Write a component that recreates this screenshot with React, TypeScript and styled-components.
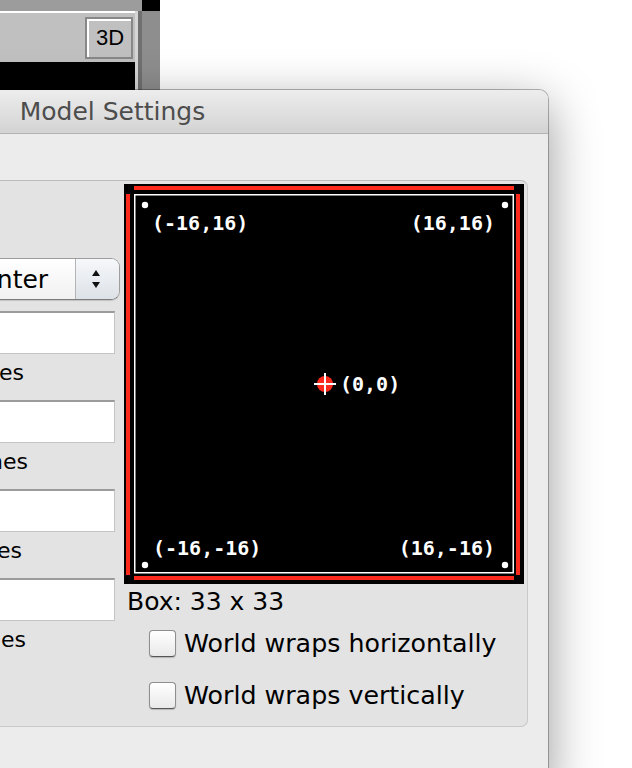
import React from "react";
import styled, { createGlobalStyle } from "styled-components";

const Global = createGlobalStyle`
  html, body { margin: 0; padding: 0; background: #fff; }
  body { font-family: "DejaVu Sans", "Liberation Sans", sans-serif; }
`;

const Page = styled.div`
  position: relative;
  width: 632px;
  height: 768px;
  overflow: hidden;
  background: #fff;
`;

/* ---------- background NetLogo window ---------- */
const BackWindow = styled.div`
  position: absolute;
  left: 0;
  top: 0;
  width: 160px;
  height: 110px;
  display: flex;
  flex-direction: column;
`;
const BackTop = styled.div`
  height: 11px;
  display: flex;
`;
const BackTopBand = styled.div`
  flex: 1;
  background: #9c9c9c;
`;
const BackTopCap = styled.div`
  width: 18px;
  background: #000;
`;
const BackBody = styled.div`
  flex: 1;
  display: flex;
`;
const BackMain = styled.div`
  width: 135px;
  display: flex;
  flex-direction: column;
`;
const Toolbar = styled.div`
  height: 49px;
  border-top: 2px solid #fff;
  background: #c0c0c0;
  display: flex;
  align-items: center;
  justify-content: flex-end;
  padding-right: 2px;
`;
const ThreeDButton = styled.div`
  width: 42px;
  height: 38px;
  border: 2px solid #888;
  box-shadow: inset 2px 2px 0 #fff;
  background: #c0c0c0;
  display: flex;
  align-items: center;
  justify-content: center;
  font-family: "Liberation Sans", Arial, sans-serif;
  font-size: 22px;
  color: #000;
  padding-left: 2px;
  box-sizing: content-box;
`;
const BackView = styled.div`
  flex: 1;
  background: #000;
`;
const BackStrip = styled.div<{ $w: number; $c: string }>`
  width: ${(p) => p.$w}px;
  background: ${(p) => p.$c};
`;

/* ---------- dialog ---------- */
const Dialog = styled.div`
  position: absolute;
  left: -323px;
  top: 90px;
  width: 871px;
  height: 700px;
  background: #ececec;
  border-radius: 9px 9px 0 0;
  box-shadow: 0 0 0 1px rgba(0, 0, 0, 0.28), 0 14px 50px rgba(0, 0, 0, 0.42);
  display: flex;
  flex-direction: column;
`;
const TitleBar = styled.div`
  height: 43px;
  background: linear-gradient(#ededed, #d3d3d3);
  border-bottom: 1px solid #b3b3b3;
  border-radius: 9px 9px 0 0;
  display: flex;
  align-items: center;
  justify-content: center;
  font-size: 25px;
  color: #4d4d4d;
`;
const DialogBody = styled.div`
  padding: 46px 20px 0 20px;
`;
const Group = styled.div`
  display: flex;
  gap: 4px;
  padding: 3px 3px 5px 0;
  background: #e3e3e3;
  border: 1px solid #c9c9c9;
  border-top-color: #bcbcbc;
  border-radius: 7px;
`;

/* left column */
const LeftCol = styled.div`
  flex: 1;
  min-width: 0;
  display: flex;
  flex-direction: column;
  align-items: flex-end;
  padding-top: 74px;
`;
const OriginRow = styled.div`
  display: flex;
  align-items: center;
  gap: 10px;
  margin-bottom: 11px;
`;
const SmallLabel = styled.span`
  font-size: 22px;
  color: #000;
  white-space: nowrap;
`;
const Popup = styled.div`
  width: 161px;
  height: 40px;
  flex-shrink: 0;
  display: flex;
  border: 1px solid #9d9d9d;
  border-bottom-color: #7c7c7c;
  border-radius: 5px 9px 9px 5px;
  background: linear-gradient(#ffffff, #f1f1f1);
  box-shadow: 0 1px 1px rgba(0, 0, 0, 0.15);
  overflow: hidden;
`;
const PopupText = styled.div`
  flex: 1;
  display: flex;
  align-items: center;
  padding-left: 6px;
  font-size: 25px;
  color: #000;
`;
const Stepper = styled.div`
  width: 39px;
  border-left: 1px solid #b4b4b4;
  background: linear-gradient(#f6f8fa, #dde2e8);
  display: flex;
  align-items: center;
  justify-content: center;
  padding-right: 4px;
`;
const FieldBlock = styled.div`
  display: flex;
  flex-direction: column;
  align-items: flex-end;
  margin-bottom: 14px;
`;
const FieldRow = styled.div`
  display: flex;
  align-items: center;
  gap: 10px;
  margin-right: 5px;
`;
const TextField = styled.div`
  width: 160px;
  height: 40px;
  flex-shrink: 0;
  background: #fff;
  border: 1px solid #c4c4c4;
  border-top: 2px solid #9b9b9b;
`;
const FieldHint = styled.div<{ $right: number }>`
  margin-top: 6px;
  margin-right: ${(p) => p.$right}px;
  height: 26px;
  line-height: 26px;
  font-size: 22px;
  color: #000;
  white-space: nowrap;
`;

/* right column */
const RightCol = styled.div`
  width: 400px;
  flex-shrink: 0;
  display: flex;
  flex-direction: column;
`;
const WorldView = styled.svg`
  display: block;
  width: 400px;
  height: 400px;
`;
const BoxLabel = styled.div`
  margin-top: 3px;
  margin-left: 3px;
  line-height: 30px;
  font-size: 25px;
  color: #000;
`;
const CheckRow = styled.label`
  height: 52px;
  display: flex;
  align-items: center;
  gap: 8px;
  padding-left: 25px;
  font-size: 25.3px;
  color: #000;
`;
const CheckBox = styled.span`
  width: 27px;
  height: 27px;
  box-sizing: border-box;
  border: 1px solid #8e8e8e;
  border-bottom-color: #555;
  border-radius: 4px;
  background: linear-gradient(#ffffff, #e9e9e9);
  box-shadow: 0 1px 1px rgba(0, 0, 0, 0.2);
`;

const RED = "#fc2a1c";
const monoText = {
  fontFamily: '"DejaVu Sans Mono", monospace',
  fontWeight: 700,
  fontSize: 20,
  fill: "#fff",
} as const;

function View() {
  return (
    <WorldView viewBox="0 0 400 400">
      <rect x="0" y="0" width="400" height="400" fill="#000" />
      <rect x="10" y="2" width="380" height="4" fill={RED} />
      <rect x="10" y="392" width="380" height="4" fill={RED} />
      <rect x="2" y="10" width="4" height="381" fill={RED} />
      <rect x="392" y="10" width="4" height="381" fill={RED} />
      <rect x="10.75" y="10.75" width="378.5" height="378" fill="none" stroke="#fff" strokeWidth="1.5" />
      <circle cx="21" cy="21" r="3.2" fill="#fff" />
      <circle cx="381" cy="21" r="3.2" fill="#fff" />
      <circle cx="21" cy="381" r="3.2" fill="#fff" />
      <circle cx="381" cy="381" r="3.2" fill="#fff" />
      <text x="28" y="46" style={monoText}>(-16,16)</text>
      <text x="371" y="46" textAnchor="end" style={monoText}>(16,16)</text>
      <text x="29" y="371" style={monoText}>(-16,-16)</text>
      <text x="371" y="371" textAnchor="end" style={monoText}>(16,-16)</text>
      <circle cx="201" cy="200" r="8" fill={RED} />
      <line x1="190" y1="200" x2="212" y2="200" stroke="#fff" strokeWidth="2" />
      <line x1="201" y1="189" x2="201" y2="211" stroke="#fff" strokeWidth="2" />
      <text x="216" y="207" style={monoText}>(0,0)</text>
    </WorldView>
  );
}

function StepArrows() {
  return (
    <svg width="10" height="20" viewBox="0 0 10 20">
      <path d="M5 1 L9 7 L1 7 Z" fill="#111" />
      <path d="M1 13 L9 13 L5 19 Z" fill="#111" />
    </svg>
  );
}

const fields = [
  { name: "min-pxcor", hint: "minimum x coordinate for patches", right: 96 },
  { name: "max-pxcor", hint: "maximum x coordinate for patches", right: 92 },
  { name: "min-pycor", hint: "minimum y coordinate for patches", right: 98 },
  { name: "max-pycor", hint: "maximum y coordinate for patches", right: 94 },
];

export default function App() {
  return (
    <Page>
      <Global />
      <BackWindow>
        <BackTop>
          <BackTopBand />
          <BackTopCap />
        </BackTop>
        <BackBody>
          <BackMain>
            <Toolbar>
              <ThreeDButton>3D</ThreeDButton>
            </Toolbar>
            <BackView />
          </BackMain>
          <BackStrip $w={3} $c="#d5d5d5" />
          <BackStrip $w={4} $c="#707070" />
          <BackStrip $w={18} $c="#8e8e8e" />
        </BackBody>
      </BackWindow>

      <Dialog>
        <TitleBar>Model Settings</TitleBar>
        <DialogBody>
          <Group>
            <LeftCol>
              <OriginRow>
                <SmallLabel>location of origin:</SmallLabel>
                <Popup>
                  <PopupText>Center</PopupText>
                  <Stepper>
                    <StepArrows />
                  </Stepper>
                </Popup>
              </OriginRow>
              {fields.map((f) => (
                <FieldBlock key={f.name}>
                  <FieldRow>
                    <SmallLabel>{f.name}</SmallLabel>
                    <TextField />
                  </FieldRow>
                  <FieldHint $right={f.right}>{f.hint}</FieldHint>
                </FieldBlock>
              ))}
            </LeftCol>
            <RightCol>
              <View />
              <BoxLabel>Box: 33 x 33</BoxLabel>
              <CheckRow>
                <CheckBox />
                World wraps horizontally
              </CheckRow>
              <CheckRow>
                <CheckBox />
                World wraps vertically
              </CheckRow>
            </RightCol>
          </Group>
        </DialogBody>
      </Dialog>
    </Page>
  );
}
